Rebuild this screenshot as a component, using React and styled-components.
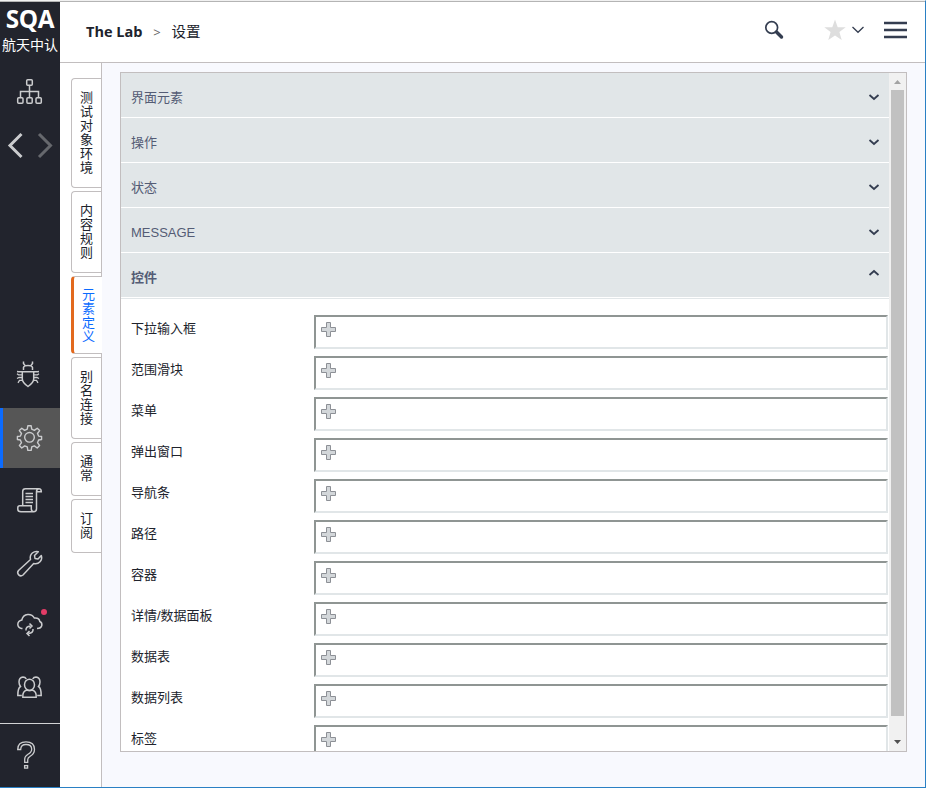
import React from "react";
import styled, { createGlobalStyle, css } from "styled-components";

const GlobalStyle = createGlobalStyle`
  * { box-sizing: border-box; }
  html, body { margin: 0; background: #fff; }
  body {
    font-family: "Liberation Sans", "Noto Sans CJK SC", sans-serif;
    font-size: 13px;
    color: #20232c;
    overflow: hidden;
  }
`;

const Window = styled.div`
  width: 926px;
  height: 788px;
  display: flex;
  border-right: 1px solid #2a80c4;
  border-bottom: 1px solid #2a80c4;
  border-top: 1px solid #f1f1f1;
  background: #fff;
`;

const Sidebar = styled.nav`
  width: 60px;
  flex: none;
  display: flex;
  flex-direction: column;
  border-top: 1px solid #b4b4b4;
  background: #22242d;
`;

const Logo = styled.div`
  height: 60px;
  flex: none;
  color: #fff;
  white-space: nowrap;
  padding-top: 1px;
`;

const LogoMark = styled.div`
  font: 700 24.3px/31px "Open Sans", sans-serif;
  text-align: center;
  letter-spacing: -0.3px;
  height: 32px;
`;

const LogoName = styled.div`
  font: 400 14px/18px "Noto Sans CJK SC", sans-serif;
  text-align: center;
`;

const Slot = styled.a`
  display: block;
  width: 60px;
  height: 60px;
  flex: none;
  margin-bottom: 3px;
  ${(p) =>
    p.$active &&
    css`
      background: #565656;
      box-shadow: inset 3px 0 0 #0b6bff;
    `}
`;

const Glyph = styled.svg`
  display: block;
  width: 60px;
  height: 60px;
  fill: none;
  stroke: #cbccce;
  stroke-width: ${(p) => p.$weight || 1.5};
`;

const Spacer = styled.div`
  flex: 1;
`;

const HelpSlot = styled(Slot)`
  height: 64px;
  margin: 0;
  border-top: 1px solid #d2d3d5;
`;

const Main = styled.main`
  flex: 1;
  min-width: 0;
  display: flex;
  flex-direction: column;
`;

const Header = styled.header`
  height: 62px;
  flex: none;
  display: flex;
  align-items: center;
  padding: 0 18px 0 26px;
  border-top: 1px solid #b4b4b4;
  border-bottom: 1px solid #c2bebf;
`;

const Crumb = styled.span`
  font: ${(p) => (p.$strong ? 700 : 400)} 14.5px/20px "Open Sans", "Noto Sans CJK SC", sans-serif;
  color: #20232c;
`;

const Separator = styled.span`
  width: 29px;
  text-align: center;
  font: 13px/20px "Open Sans", sans-serif;
  color: #666;
`;

const Tools = styled.div`
  margin-left: auto;
  padding-bottom: 4px;
  display: flex;
  align-items: center;
`;

const ToolIcon = styled.svg`
  display: block;
  fill: none;
  margin-left: ${(p) => p.$gap || 0}px;
`;

const Body = styled.div`
  flex: 1;
  display: flex;
  min-height: 0;
`;

const Tabs = styled.div`
  width: 42px;
  flex: none;
  display: flex;
  flex-direction: column;
  gap: 3px;
  padding: 15px 0 0 11px;
  border-right: 1px solid #c2bebf;
`;

const Tab = styled.a`
  width: ${(p) => (p.$active ? 31 : 30)}px;
  border: 1px solid #c2bebf;
  border-right: 0;
  border-radius: 4px 0 0 4px;
  background: #fff;
  writing-mode: vertical-rl;
  text-orientation: upright;
  font-size: 13px;
  letter-spacing: 1px;
  line-height: 26px;
  padding: 12px 3px 12px 0;
  ${(p) =>
    p.$active &&
    css`
      color: #0b6bff;
      border-left: 3px solid #e2691e;
      padding: 11px 2px 9px 0;
    `}
`;

const Content = styled.section`
  flex: 1;
  background: #f8f9fe;
  padding: 9px 18px;
`;

const Panel = styled.div`
  height: 680px;
  display: flex;
  border: 1px solid #c2bebf;
  background: #fff;
  overflow: hidden;
`;

const PanelBody = styled.div`
  flex: 1;
  min-width: 0;
`;

const SectionHead = styled.div`
  height: 45px;
  display: flex;
  align-items: center;
  justify-content: space-between;
  padding: ${(p) => (p.$latin ? 4 : 2)}px 8px 0 10px;
  background: #e1e6e8;
  border-bottom: 1px solid #fff;
  color: #545c75;
  font-weight: ${(p) => (p.$open ? 700 : 400)};
`;

const Chevron = styled.svg`
  display: block;
  width: 14px;
  height: 10px;
  margin-top: ${(p) => (p.$open ? -6 : p.$latin ? 0 : 2)}px;
  transform: ${(p) => (p.$open ? "rotate(180deg)" : "none")};
`;

const Fields = styled.div`
  border-top: 1px solid #e1e6e8;
  padding: 16px 1px 0 10px;
`;

const FieldRow = styled.div`
  height: 34px;
  display: flex;
  margin-bottom: 7px;
`;

const FieldLabel = styled.label`
  width: 183px;
  flex: none;
  line-height: 28px;
`;

const FieldBox = styled.div`
  flex: 1;
  border: 2px solid;
  border-color: #8f9593 #e1e6e8 #e1e6e8 #8f9593;
  background: #fff;
  padding: 5px;
`;

const PlusIcon = styled.svg`
  display: block;
  width: 15px;
  height: 15px;
`;

const Scrollbar = styled.div`
  width: 17px;
  flex: none;
  display: flex;
  flex-direction: column;
  align-items: center;
  background: #f1f1f1;
`;

const Thumb = styled.div`
  width: 13px;
  height: 626px;
  background: #c1c1c1;
`;

const Arrow = styled.svg`
  display: block;
  width: 17px;
  height: 17px;
`;

const slots = [
  {
    id: "bug",
    art: (
      <>
        <path d="M23.500 25v-2.500q.5-2 4.500-2t4.500 2v2.500M25 20.500l-1.500-2v-2M31 20.500l1.500-2v-2" />
        <path d="M17 26.500l1.500.2h19l1.500-.2" />
        <path d="M22.300 27v7q0 3.500 5.700 7.500q5.700-4 5.700-7.500v-7" />
        <path d="M22.300 29.800h-3.800l-1.500-1M22.300 32.500h-3.300l-2 1M22.300 35.300h-2.800l-1.500 2.500M33.700 29.800h3.800l1.500-1M33.700 32.500h3.300l2 1M33.700 35.300h2.800l1.500 2.500" strokeWidth="1.300" />
      </>
    ),
  },
  {
    id: "settings",
    active: true,
    art: (
      <g transform="translate(29.500 29.300) scale(.93) translate(-29.500 -29.900)">
        <circle cx="29.500" cy="29.900" r="5.200" />
        <path
          strokeLinejoin="round"
          d="M27.700 17.500h3.600l.6 3.700 2.800 1.200 3.100-2.300 2.600 2.600-2.300 3.100 1.200 2.800 3.200.5v3.200l-3.200.5-1.200 2.900 2.300 3.100-2.600 2.600-3.100-2.300-2.800 1.200-.6 3.700h-3.600l-.6-3.700-2.800-1.200-3.100 2.300-2.600-2.600 2.300-3.100-1.200-2.900-3.200-.5v-3.200l3.200-.5 1.200-2.800-2.300-3.100 2.600-2.600 3.100 2.300 2.800-1.200z"
        />
      </g>
    ),
  },
  {
    id: "script",
    art: (
      <>
        <path d="M22.700 34.500v-14q0-2.700 2.800-2.700h13.500q2.300 0 2.300 3h-4.500M38.800 17.800q-2.300.5-2.300 3v17q0 3-3 3h-12.500q-3.200 0-3.200-2.500v-1.500q0-2 2-2h11.500v3q0 2.500 2.200 3" />
        <path d="M25.500 22.500h7.500M25.500 25.500h7.500M25.500 28.500h7.500M25.500 31.500h7.500" />
      </>
    ),
  },
  {
    id: "tools",
    art: (
      <path
        strokeLinejoin="round"
        d="M18.500 36.500L30.500 25.500q-1-4 1.800-6.500q2.500-2 6-1.300L34.500 21.500l.5 3 3 .5 3.300-3.500q1.200 3.500-1.300 6.300q-2.500 2.700-6.300 1.700L23 41q-2.200 1.800-4.300-.1q-2-2.300-.2-4.400z"
      />
    ),
  },
  {
    id: "sync",
    art: (
      <>
        <path d="M22.500 31.500h-1q-3.700-.7-3.700-4.200q.2-3.500 4-4.300q1-5 6-5.500q4.500-.3 6.500 3.500q5-.5 5.500 3.500q2.500 1 2 4q-.7 3-4.800 3" />
        <path d="M26 33.500q-.5-4 4.500-4.500M29.500 26.500l2.500 2.500-2.500 2.500M33 32q.5 4-4.500 4.500M29.500 34l-2.500 2.500 2.500 2.500" />
        <circle cx="44" cy="15" r="3" fill="#e33c67" stroke="none" />
      </>
    ),
  },
  {
    id: "users",
    art: (
      <>
        <ellipse cx="29.500" cy="24.800" rx="5" ry="5.600" />
        <path d="M22.800 37.200q-.5-6 4.200-7.200q2.500 1.200 5 0q4.700 1.200 4.200 7.200z" />
        <path d="M26.300 19q-1-2-3.300-2q-4 .5-4 5q0 2.500 1.500 4.500q-2.700 1.500-2.700 9h4M32.700 19q1-2 3.300-2q4 .5 4 5q0 2.500-1.500 4.500q2.700 1.500 2.700 9h-4" />
      </>
    ),
  },
];

const tabs = ["测试对象环境", "内容规则", "元素定义", "别名连接", "通常", "订阅"];
const sections = ["界面元素", "操作", "状态", "MESSAGE", "控件"];
const fields = [
  "下拉输入框", "范围滑块", "菜单", "弹出窗口", "导航条", "路径",
  "容器", "详情/数据面板", "数据表", "数据列表", "标签",
];

function AddIcon() {
  return (
    <PlusIcon viewBox="0 0 15 15">
      <path d="M5.500.5h4v5h5v4h-5v5h-4v-5h-5v-4h5z" fill="#d3d7da" stroke="#8d9096" />
    </PlusIcon>
  );
}

export default function App() {
  return (
    <>
      <GlobalStyle />
      <Window>
        <Sidebar>
          <Logo>
            <LogoMark>SQA</LogoMark>
            <LogoName>航天中认</LogoName>
          </Logo>
          <Slot>
            <Glyph viewBox="0 0 60 60">
              <path d="M29.500 23v6M20.500 35v-5.500h18v5.500M29.500 29v6" />
              <rect x="26.700" y="17.700" width="5.600" height="5.600" rx="1" />
              <rect x="17.700" y="35.700" width="5.300" height="5.600" rx="1" />
              <rect x="26.900" y="35.700" width="5.300" height="5.600" rx="1" />
              <rect x="36" y="35.700" width="5.300" height="5.600" rx="1" />
            </Glyph>
          </Slot>
          <Slot>
            <Glyph viewBox="0 0 60 60" $weight={3}>
              <path d="M21.500 9L10 20.500l11.500 11.500" />
              <path d="M39 9L50.500 20.500L39 32" stroke="#66686d" />
            </Glyph>
          </Slot>
          <Spacer />
          {slots.map((s) => (
            <Slot key={s.id} $active={s.active}>
              <Glyph viewBox="0 0 60 60">{s.art}</Glyph>
            </Slot>
          ))}
          <HelpSlot>
            <Glyph viewBox="0 0 60 60" $weight={1.3}>
              <path d="M17.700 25.500q0-7.700 8.300-7.700q8.500 0 8.500 7.500q0 4.500-4.300 7q-2.500 1.500-2.500 3.500v2.500h-3v-3q0-3 3.300-5q3.700-2 3.700-5q0-4.800-5.700-4.800q-5.300 0-5.300 5z" />
              <rect x="24.600" y="41.600" width="3" height="2.500" />
            </Glyph>
          </HelpSlot>
        </Sidebar>
        <Main>
          <Header>
            <Crumb $strong>The Lab</Crumb>
            <Separator>&gt;</Separator>
            <Crumb>设置</Crumb>
            <Tools>
              <ToolIcon width="20" height="20" viewBox="0 0 20 20">
                <circle cx="7.700" cy="7.500" r="5.900" stroke="#343d50" strokeWidth="1.700" />
                <path d="M12.500 12l5 5" stroke="#343d50" strokeWidth="3.500" strokeLinecap="round" />
              </ToolIcon>
              <ToolIcon $gap={40} width="22" height="22" viewBox="0 0 22 22">
                <path
                  d="M11 .5l2.700 7.700h8l-6.300 4.900 2.300 8L11 16.400l-6.700 4.700 2.300-8L.3 8.200h8z"
                  fill="#dedede"
                />
              </ToolIcon>
              <ToolIcon $gap={6} width="12" height="8" viewBox="0 0 12 8">
                <path d="M.5 1L6 6.300 11.500 1" stroke="#343d50" strokeWidth="1.300" />
              </ToolIcon>
              <ToolIcon $gap={20} width="23" height="18" viewBox="0 0 23 18">
                <path d="M0 2h23M0 9h23M0 16h23" stroke="#343d50" strokeWidth="2.500" />
              </ToolIcon>
            </Tools>
          </Header>
          <Body>
            <Tabs>
              {tabs.map((t) => (
                <Tab key={t} $active={t === "元素定义"}>{t}</Tab>
              ))}
            </Tabs>
            <Content>
              <Panel>
                <PanelBody>
                  {sections.map((s) => (
                    <SectionHead key={s} $open={s === "控件"} $latin={s === "MESSAGE"}>
                      {s}
                      <Chevron $open={s === "控件"} $latin={s === "MESSAGE"} viewBox="0 0 14 10">
                        <path d="M2.500 3l4.500 4 4.500-4" fill="none" stroke="#343d50" strokeWidth="1.800" />
                      </Chevron>
                    </SectionHead>
                  ))}
                  <Fields>
                    {fields.map((f) => (
                      <FieldRow key={f}>
                        <FieldLabel>{f}</FieldLabel>
                        <FieldBox><AddIcon /></FieldBox>
                      </FieldRow>
                    ))}
                  </Fields>
                </PanelBody>
                <Scrollbar>
                  <Arrow viewBox="0 0 17 17"><path d="M5 11h7L8.500 7z" fill="#a3a3a3" /></Arrow>
                  <Thumb />
                  <Spacer />
                  <Arrow viewBox="0 0 17 17"><path d="M5 6h7L8.500 10z" fill="#505050" /></Arrow>
                </Scrollbar>
              </Panel>
            </Content>
          </Body>
        </Main>
      </Window>
    </>
  );
}
